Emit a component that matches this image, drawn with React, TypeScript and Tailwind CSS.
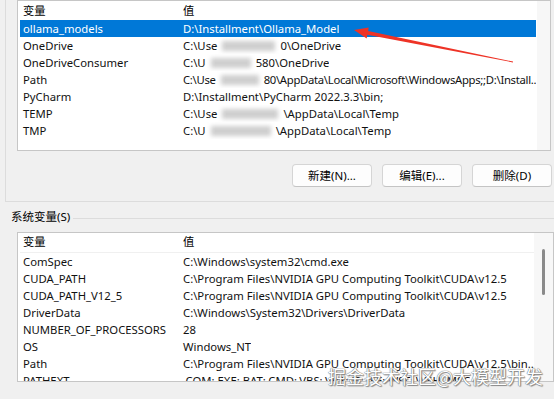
const FONT = "font-['Noto_Sans','Noto_Sans_CJK_SC',sans-serif]"

type Seg = string | { gap: number }

const userRows: { name: string; value: Seg[]; selected?: boolean; tight?: boolean }[] = [
  { name: "ollama_models", value: ["D:\\Installment\\Ollama_Model"], selected: true },
  { name: "OneDrive", value: ["C:\\Use", { gap: 63 }, "0\\OneDrive"] },
  { name: "OneDriveConsumer", value: ["C:\\U", { gap: 50 }, "580\\OneDrive"] },
  { name: "Path", value: ["C:\\Use", { gap: 48 }, "80\\AppData\\Local\\Microsoft\\WindowsApps;;D:\\Install..."], tight: true },
  { name: "PyCharm", value: ["D:\\Installment\\PyCharm 2022.3.3\\bin;"] },
  { name: "TEMP", value: ["C:\\Use", { gap: 66 }, "\\AppData\\Local\\Temp"] },
  { name: "TMP", value: ["C:\\U", { gap: 70 }, "\\AppData\\Local\\Temp"] },
]

const sysRows: { name: string; value: Seg[] }[] = [
  { name: "ComSpec", value: ["C:\\Windows\\system32\\cmd.exe"] },
  { name: "CUDA_PATH", value: ["C:\\Program Files\\NVIDIA GPU Computing Toolkit\\CUDA\\v12.5"] },
  { name: "CUDA_PATH_V12_5", value: ["C:\\Program Files\\NVIDIA GPU Computing Toolkit\\CUDA\\v12.5"] },
  { name: "DriverData", value: ["C:\\Windows\\System32\\Drivers\\DriverData"] },
  { name: "NUMBER_OF_PROCESSORS", value: ["28"] },
  { name: "OS", value: ["Windows_NT"] },
  { name: "Path", value: ["C:\\Program Files\\NVIDIA GPU Computing Toolkit\\CUDA\\v12.5\\bin..."] },
  { name: "PATHEXT", value: [".COM;.EXE;.BAT;.CMD;.VBS;.VBE;.JS;.JSE;.WSF;.WSH;.MSC"] },
]

// 打码的用户名：一段灰色模糊块
function Value({ segs, tight }: { segs: Seg[]; tight?: boolean }) {
  return (
    <div className={`flex items-center whitespace-nowrap ${tight ? "tracking-[-0.3px]" : ""}`}>
      {segs.map((s, i) =>
        typeof s === "string" ? (
          <span key={i}>{s}</span>
        ) : (
          <span key={i} className="flex shrink-0 items-center px-[5px]" style={{ width: s.gap }}>
            <span className="h-[10px] w-full bg-[#cfcfcf] blur-[2px]" />
          </span>
        )
      )}
    </div>
  )
}

function Row({ name, value, selected, tight }: { name: string; value: Seg[]; selected?: boolean; tight?: boolean }) {
  return (
    <div className={`flex h-[17px] leading-[17px] ${selected ? "bg-[#0078d7] text-white" : "text-[#111]"}`}>
      <div className="w-[160px] shrink-0 pl-[3px]">{name}</div>
      <div className="min-w-0 overflow-hidden pl-[3px]">
        <Value segs={value} tight={tight} />
      </div>
    </div>
  )
}

function Header() {
  return (
    <div className="flex h-[19px] items-center text-black">
      <div className="w-[160px] shrink-0 pl-[3px]">变量</div>
      <div className="pl-[3px]">值</div>
    </div>
  )
}

function Button({ label }: { label: string }) {
  return (
    <button className="flex h-[23px] w-[80px] items-center justify-center rounded-[4px] border border-[#d5d5d5] border-b-[#c4c4c4] bg-[#fdfdfd] text-[11.5px] text-black">
      {label}
    </button>
  )
}

export default function App() {
  return (
    <div className={`relative h-[399px] w-[554px] overflow-hidden bg-[#f0f0f0] text-[11.3px] leading-none ${FONT}`}>
      {/* 用户变量 */}
      <div className="ml-[5px] h-[202px] border-b border-l border-[#dcdcdc] pl-[11px]">
        <div className="flex h-[151px] w-[534px] border border-[#c6c6c6] bg-white">
          <div className="flex-1 overflow-hidden pl-[2px] pr-[1px]">
            <Header />
            {userRows.map((r) => (
              <Row key={r.name} {...r} />
            ))}
          </div>
          <div className="w-[13px] bg-[#f7f7f7]" />
        </div>
        <div className="mt-[13px] flex justify-end gap-[10px] pr-[2px]">
          <Button label="新建(N)..." />
          <Button label="编辑(E)..." />
          <Button label="删除(D)" />
        </div>
      </div>

      {/* 系统变量 */}
      <div className="mt-[9px] flex items-center pl-[11px]">
        <span className="text-[11.5px] text-black">系统变量(S)</span>
        <div className="ml-[3px] mt-[3px] h-px flex-1 bg-[#dcdcdc]" />
      </div>
      <div className="ml-[17px] mt-[9px] flex h-[150px] w-[537px] border border-[#c6c6c6] bg-white">
        <div className="flex-1 overflow-hidden pl-[2px]">
          <div className="border-b border-[#f0f0f0]">
            <Header />
          </div>
          {sysRows.map((r) => (
            <Row key={r.name} {...r} />
          ))}
        </div>
        <div className="flex w-[19px] justify-center bg-[#f7f7f7] pt-[16px]">
          <div className="h-[46px] w-[3px] rounded-full bg-[#8a8a8a]" />
        </div>
      </div>

      {/* 红色箭头 */}
      <svg className="pointer-events-none absolute left-0 top-0" width="554" height="399" viewBox="0 0 554 399">
        <polygon
          points="354,30 368.7,27.4 368.1,31.0 513.1,61.6 512.9,62.4 367.3,34.8 366.7,38.4"
          fill="#ee3326"
        />
      </svg>

      {/* 水印 */}
      <div className="pointer-events-none absolute left-[328px] top-[367px] font-['Noto_Sans_CJK_SC',sans-serif] text-[18px] leading-none text-white [text-shadow:0_0_1px_#6a6a6a,0_0_1px_#6a6a6a,1px_1px_1px_#8a8a8a]">
        掘金技术社区@大模型开发
      </div>
    </div>
  )
}
